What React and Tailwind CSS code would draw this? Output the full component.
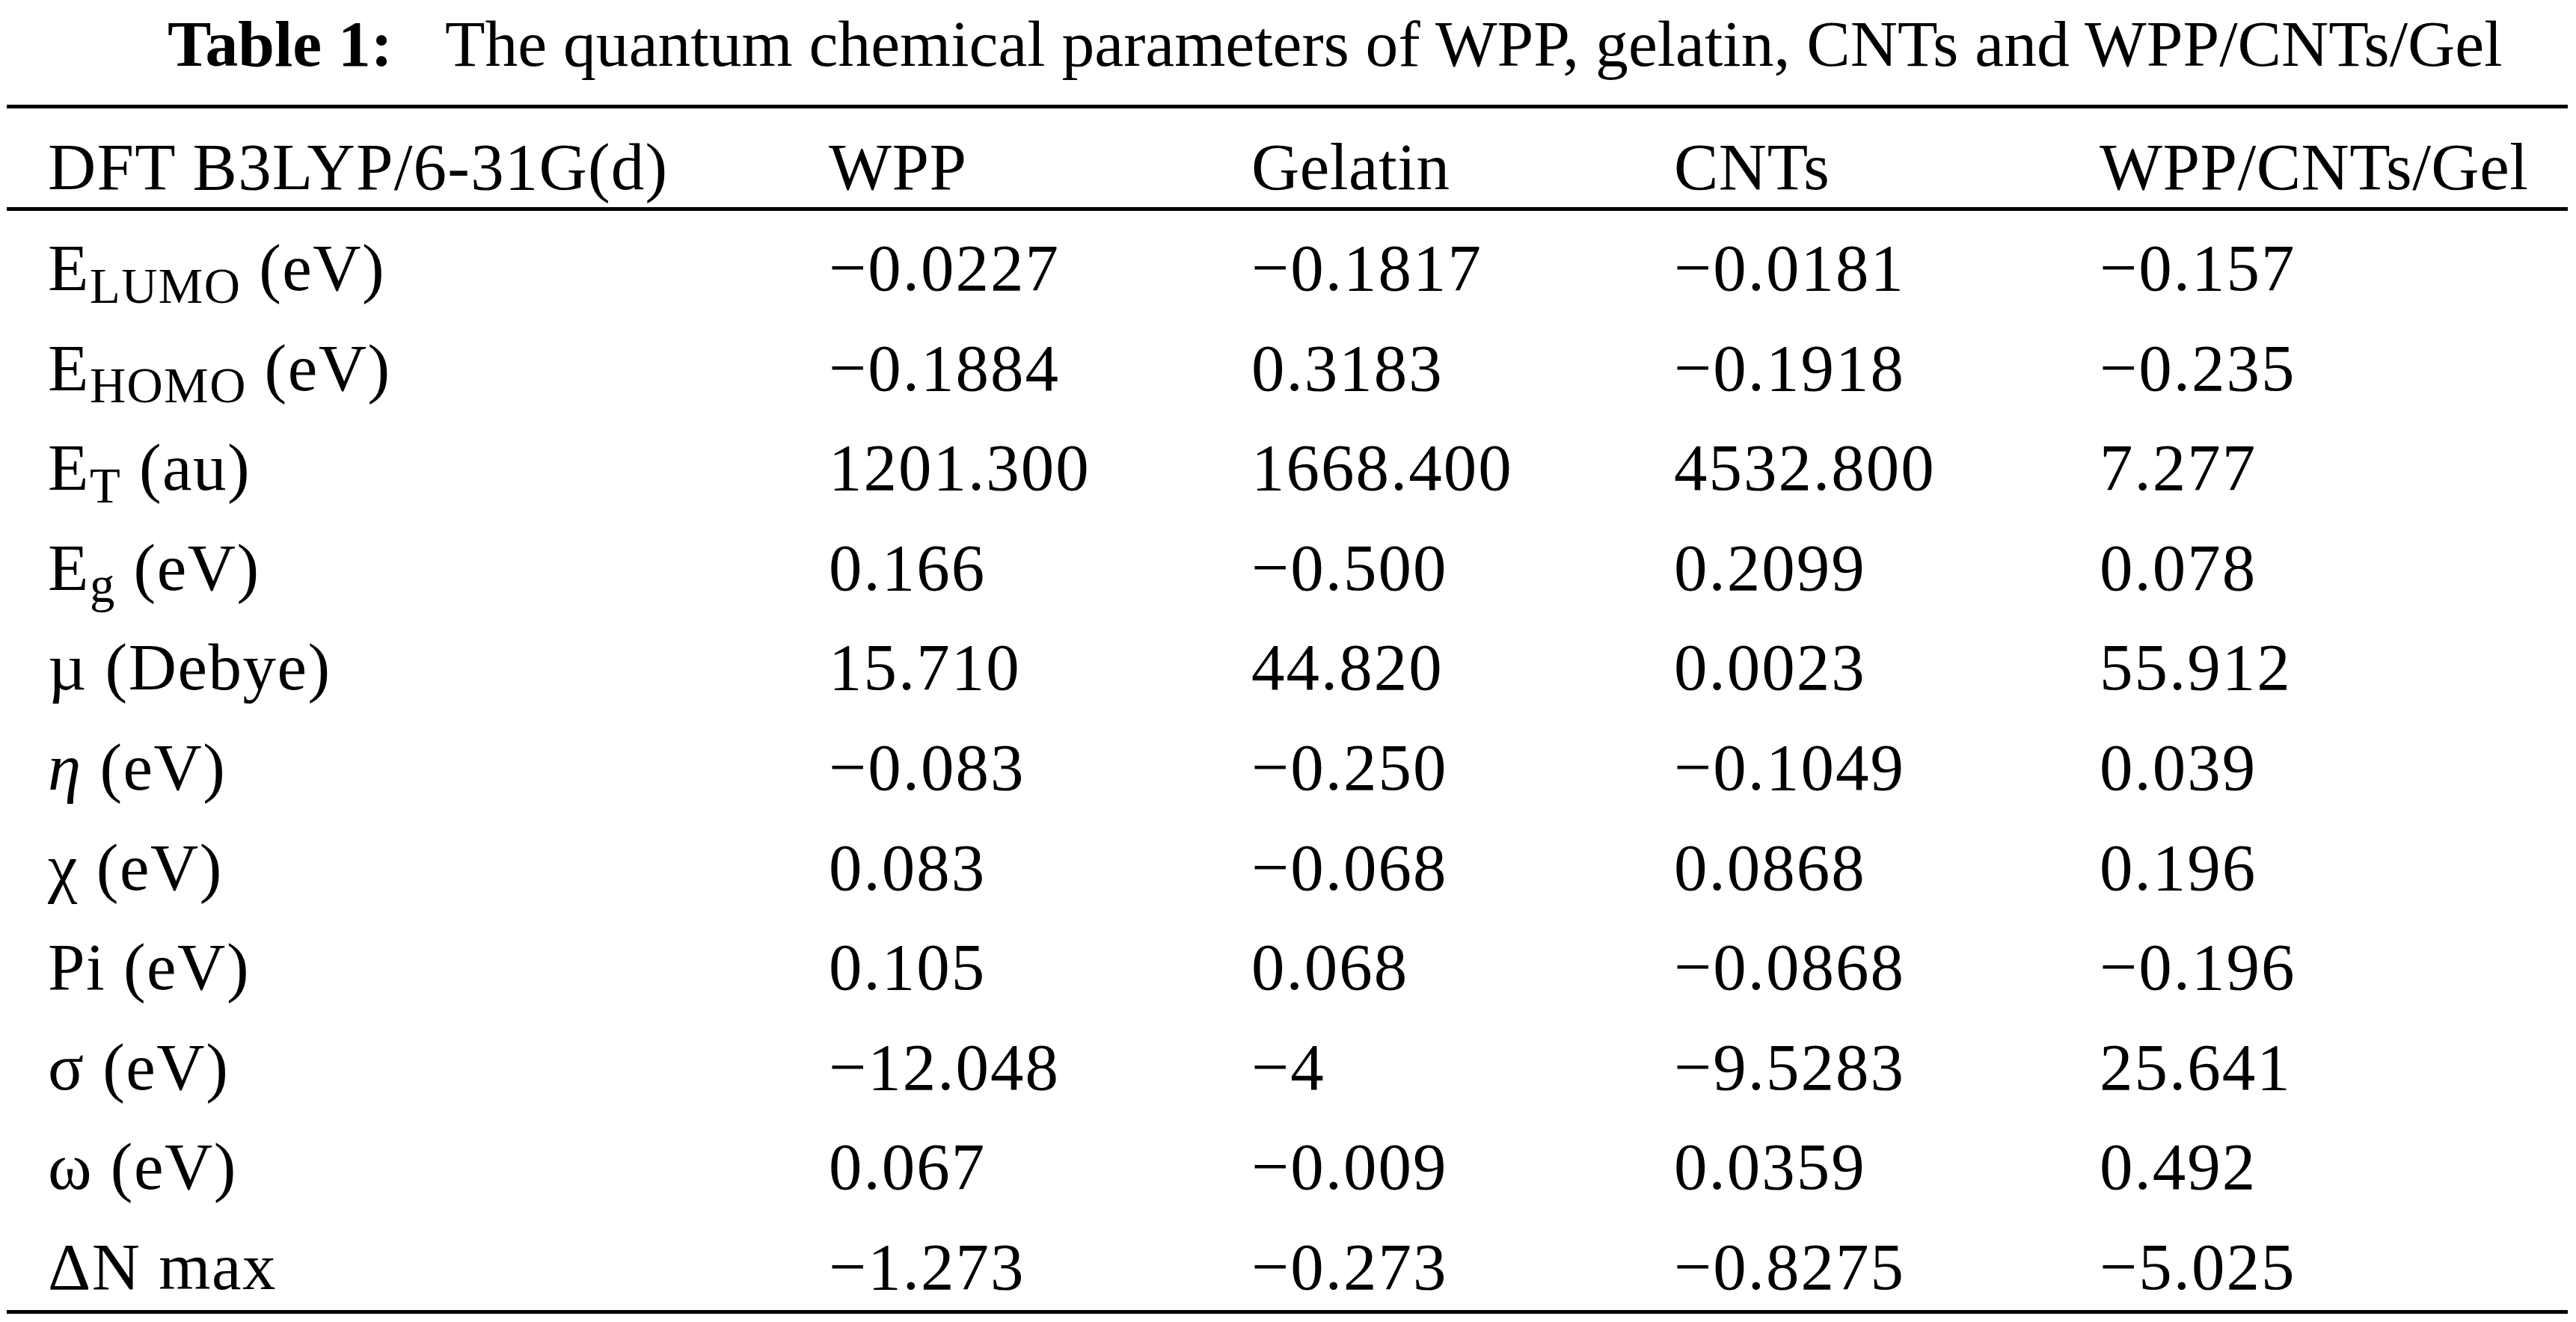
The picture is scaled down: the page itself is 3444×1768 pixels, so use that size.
const rows = [
  { label: <>E<sub>LUMO</sub> (eV)</>, v: ['−0.0227', '−0.1817', '−0.0181', '−0.157'] },
  { label: <>E<sub>HOMO</sub> (eV)</>, v: ['−0.1884', '0.3183', '−0.1918', '−0.235'] },
  { label: <>E<sub>T</sub> (au)</>, v: ['1201.300', '1668.400', '4532.800', '7.277'] },
  { label: <>E<sub>g</sub> (eV)</>, v: ['0.166', '−0.500', '0.2099', '0.078'] },
  { label: <>µ (Debye)</>, v: ['15.710', '44.820', '0.0023', '55.912'] },
  { label: <><i>η</i> (eV)</>, v: ['−0.083', '−0.250', '−0.1049', '0.039'] },
  { label: <>χ (eV)</>, v: ['0.083', '−0.068', '0.0868', '0.196'] },
  { label: <>Pi (eV)</>, v: ['0.105', '0.068', '−0.0868', '−0.196'] },
  { label: <>σ (eV)</>, v: ['−12.048', '−4', '−9.5283', '25.641'] },
  { label: <>ω (eV)</>, v: ['0.067', '−0.009', '0.0359', '0.492'] },
  { label: <>ΔN max</>, v: ['−1.273', '−0.273', '−0.8275', '−5.025'] },
]

const cols = 'grid grid-cols-[1044px_565px_565px_569px_1fr]'

export default function App() {
  return (
    <div className="w-[3444px] h-[1768px] bg-white text-black font-['Liberation_Serif','Times_New_Roman',serif] overflow-hidden">
      <div className="h-[140px] pl-[224px] text-[87.6px] leading-[118px] whitespace-nowrap">
        <span className="font-bold mr-[70px]">Table 1:</span>
        <span>The quantum chemical parameters of WPP, gelatin, CNTs and WPP/CNTs/Gel</span>
      </div>
      <div className="ml-[9px] w-[3424px] border-t-[5px] border-b-[5px] border-black text-[89px]">
        <div className={`${cols} pl-[55px] pt-[24px] leading-[108px] tracking-[0.5px] border-b-[5px] border-black whitespace-nowrap`}>
          <span className="tracking-[1.2px]">DFT B3LYP/6-31G(d)</span>
          <span>WPP</span>
          <span>Gelatin</span>
          <span>CNTs</span>
          <span>WPP/CNTs/Gel</span>
        </div>
        {rows.map((r, i) => (
          <div key={i} className={`${cols} pl-[55px] h-[133.6px] pt-[20px] leading-[113.6px] tracking-[1.5px] whitespace-nowrap`}>
            <span>{r.label}</span>
            {r.v.map((x, j) => (
              <span key={j} className="tracking-[2px]">{x}</span>
            ))}
          </div>
        ))}
      </div>
    </div>
  )
}
